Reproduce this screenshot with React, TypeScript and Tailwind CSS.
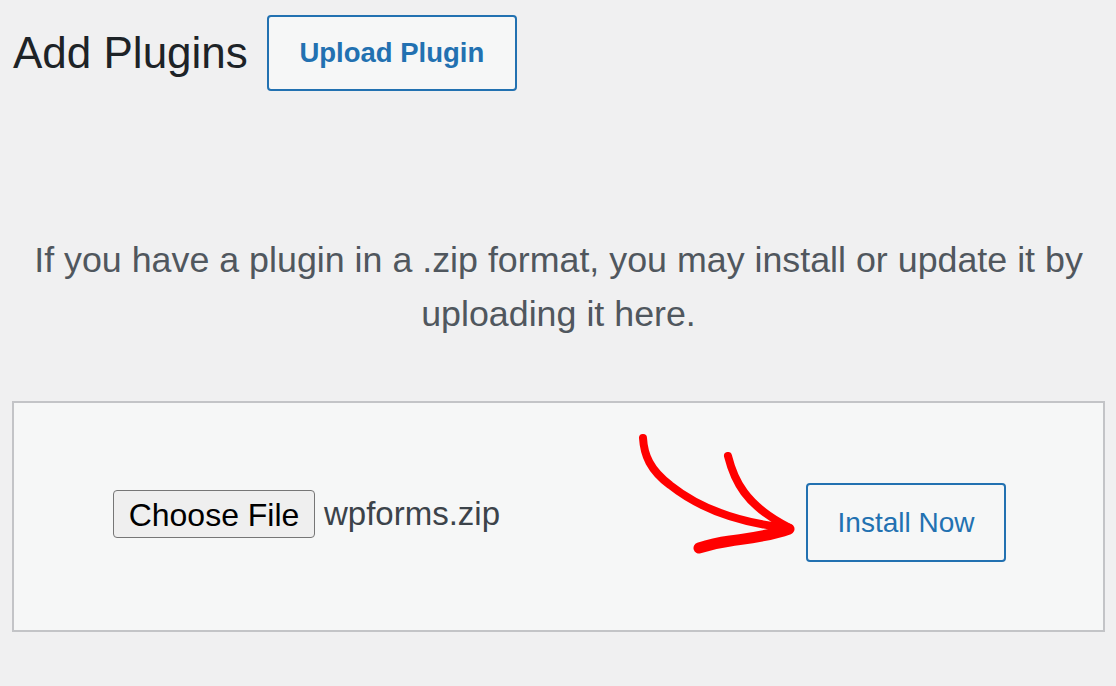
import React from "react";

export default function App() {
  return (
    <div className="min-h-[686px] bg-[#f0f0f1] font-['Liberation_Sans',Arial,sans-serif] pl-[12px] pr-[11px] pt-[15px]">
      {/* Header */}
      <div className="flex items-center gap-[19px]">
        <h1 className="text-[44px] leading-none text-[#1d2327] pl-[1px]">Add Plugins</h1>
        <button className="h-[76px] w-[250px] rounded-[4px] border-2 border-[#2271b1] bg-[#f6f7f7] text-[27.5px] font-bold text-[#2271b1]">
          Upload Plugin
        </button>
      </div>

      {/* Help text */}
      <p className="mt-[142px] text-center text-[35.8px] leading-[54px] text-[#50575e]">
        If you have a plugin in a .zip format, you may install or update it by uploading it here.
      </p>

      {/* Upload form */}
      <div className="relative mt-[60px] flex h-[231px] items-start border-2 border-[#c3c4c7] bg-[#f6f7f7] pt-[80px]">
        <div className="ml-[99px] mt-[6px] flex items-center gap-[9px]">
          <button className="h-[48px] w-[202px] rounded-[4px] border border-[#767676] bg-[#efefef] text-[32px] text-black">
            Choose File
          </button>
          <span className="text-[33px] text-[#3c434a]">wpforms.zip</span>
        </div>
        <button className="ml-auto mr-[97px] h-[79px] w-[200px] rounded-[4px] border-2 border-[#2271b1] bg-[#f6f7f7] text-[28px] text-[#2271b1]">
          Install Now
        </button>

        {/* Annotation arrow */}
        <svg
          className="absolute left-[606px] top-[17px]"
          width="200"
          height="150"
          viewBox="0 0 200 150"
          fill="none"
        >
          <path
            d="M23 18 C 24 35, 30 50, 50 65 C 75 85, 110 102, 168 108"
            stroke="#ff0000"
            strokeWidth="8"
            strokeLinecap="round"
          />
          <path
            d="M108 36 C 114 60, 125 85, 168 107"
            stroke="#ff0000"
            strokeWidth="8"
            strokeLinecap="round"
          />
          <path
            d="M169 109 C 150 116, 130 118, 110 121 C 95 123, 85 126, 79 128"
            stroke="#ff0000"
            strokeWidth="11"
            strokeLinecap="round"
          />
        </svg>
      </div>
    </div>
  );
}
